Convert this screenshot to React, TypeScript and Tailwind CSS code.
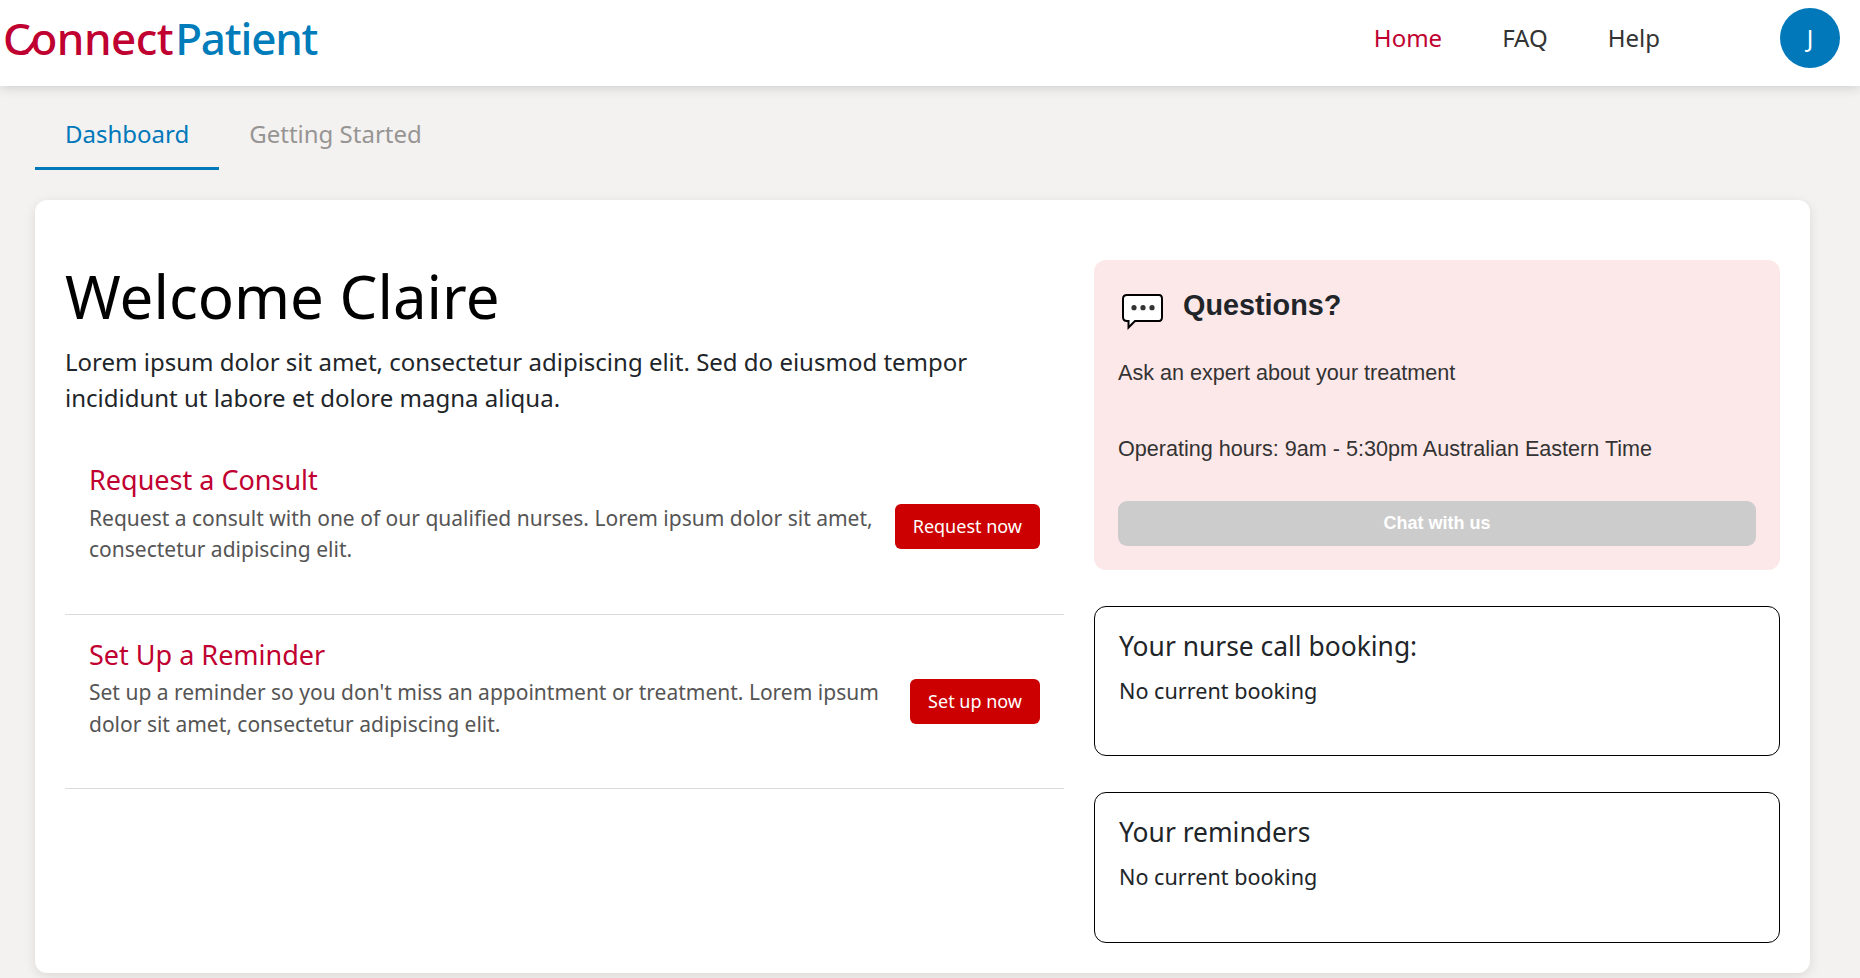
function Logo() {
  return (
    <div className="relative mt-2 flex h-[60px] items-center text-[44px] leading-[60px] font-medium">
      <span className="tracking-[-0.5px] text-[#bf0030]">Connect</span>
      <span className="ml-[2px] tracking-[-1.2px] text-[#007cba]">Patient</span>
      <svg className="absolute top-0 left-0" width="40" height="60" viewBox="0 0 40 60">
        <path d="M19 44.8C25 44.8 28 39 33 32" fill="none" stroke="#bf0030" strokeWidth="4" />
      </svg>
    </div>
  );
}

function ChatIcon() {
  return (
    <svg width="42" height="38" viewBox="0 0 42 38" className="shrink-0">
      <path
        d="M5 1H37Q40 1 40 5V23Q40 27 37 27H13L6.5 33.5V27H5Q1 27 1 23V5Q1 1 5 1Z"
        fill="#fff"
        stroke="#000"
        strokeWidth="2"
      />
      <circle cx="12" cy="13.7" r="2.6" fill="#333" />
      <circle cx="21" cy="13.7" r="2.6" fill="#333" />
      <circle cx="30" cy="13.7" r="2.6" fill="#333" />
    </svg>
  );
}

type TaskProps = { title: string; text: string; action: string; boxClass: string; textClass: string };

function Task({ title, text, action, boxClass, textClass }: TaskProps) {
  return (
    <section className={`flex items-start border-b border-[#dbdbdb] px-6 pt-6 ${boxClass}`}>
      <div className="w-0 grow">
        <h2 className="text-[27px] leading-[32px] text-[#bf0030]">{title}</h2>
        <p className={`text-[21px] leading-[31.5px] text-[#555] ${textClass}`}>{text}</p>
      </div>
      <button className="mt-10 ml-4 h-[45px] shrink-0 rounded-[6px] bg-[#cc0000] px-[18px] pb-[2px] text-[18px] whitespace-nowrap text-white">
        {action}
      </button>
    </section>
  );
}

function InfoCard({ title, boxClass }: { title: string; boxClass: string }) {
  return (
    <section className={`mt-9 rounded-xl border border-black px-6 pt-6 text-[#212529] ${boxClass}`}>
      <h2 className="text-[26.4px] leading-[31px]">{title}</h2>
      <p className="mt-[13px] text-[21.6px] leading-[32.4px]">No current booking</p>
    </section>
  );
}

export default function App() {
  return (
    <div className="h-[978px] overflow-hidden bg-[#f3f2f1] font-['Noto_Sans',sans-serif] text-[24px] leading-[36px]">
      <header className="relative flex h-[86px] items-start bg-white pr-5 pl-[3px] shadow-[0_0_12px_rgba(0,0,0,0.2)]">
        <Logo />
        <nav className="mt-5 ml-auto flex gap-[60px] text-[#333]">
          <a className="text-[#bf0030]">Home</a>
          <a>FAQ</a>
          <a>Help</a>
        </nav>
        <div className="mt-2 ml-[120px] flex size-[60px] items-center justify-center rounded-full bg-[#0078ba] text-white">
          J
        </div>
      </header>

      <nav className="flex h-[84px] pl-[35px]">
        <a className="border-b-[3px] border-[#0078ba] px-[30px] pt-[30px] text-[#0078ba]">Dashboard</a>
        <a className="px-[30px] pt-[30px] text-[#979593]">Getting Started</a>
      </nav>

      <main className="mt-[30px] mr-[50px] ml-[35px] flex h-[773px] gap-[30px] rounded-xl bg-white px-[30px] pt-[60px] shadow-[0_3px_12px_rgba(0,0,0,0.1)]">
        <div className="w-[999px]">
          <h1 className="text-[60px] leading-[72px] text-black">Welcome Claire</h1>
          <p className="mt-3 mb-6 pr-16 text-[#212529]">
            Lorem ipsum dolor sit amet, consectetur adipiscing elit. Sed do eiusmod tempor incididunt ut labore et
            dolore magna aliqua.
          </p>
          <Task
            title="Request a Consult"
            text="Request a consult with one of our qualified nurses. Lorem ipsum dolor sit amet, consectetur adipiscing elit."
            action="Request now"
            boxClass="h-[175px]"
            textClass="mt-[6.6px]"
          />
          <Task
            title="Set Up a Reminder"
            text="Set up a reminder so you don't miss an appointment or treatment. Lorem ipsum dolor sit amet, consectetur adipiscing elit."
            action="Set up now"
            boxClass="h-[174px]"
            textClass="mt-[6px]"
          />
        </div>

        <aside className="w-[686px]">
          <section className="h-[310px] rounded-xl bg-[#fde8e9] px-6 pt-[26px] font-['Liberation_Sans',Arial,sans-serif] text-[#333]">
            <div className="flex pl-1">
              <div className="pt-2">
                <ChatIcon />
              </div>
              <h2 className="mt-px ml-[19px] text-[28.8px] leading-[36px] font-bold text-[#212529]">Questions?</h2>
            </div>
            <p className="mt-6 text-[21.6px] leading-[33px]">Ask an expert about your treatment</p>
            <p className="mt-[43px] text-[21.6px] leading-[33px]">
              Operating hours: 9am - 5:30pm Australian Eastern Time
            </p>
            <button className="mt-9 h-[45px] w-full rounded-[9px] bg-[#cccccc] pb-px text-[18px] font-bold text-white">
              Chat with us
            </button>
          </section>
          <InfoCard title="Your nurse call booking:" boxClass="h-[150px]" />
          <InfoCard title="Your reminders" boxClass="h-[151px]" />
        </aside>
      </main>
    </div>
  );
}
